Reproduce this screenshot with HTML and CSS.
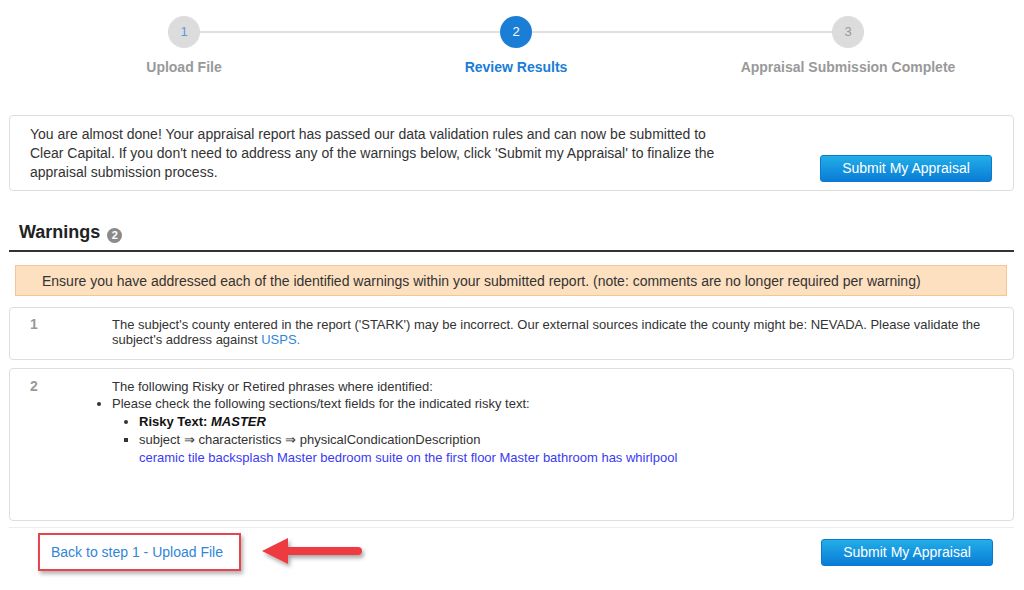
FILE: index.html
```html
<!DOCTYPE html>
<html lang="en">
<head>
  <meta charset="UTF-8">
  <meta name="viewport" content="width=device-width, initial-scale=1.0">
  <title>Review Results</title>
  <link rel="stylesheet" href="styles.css">
</head>
<body>
  <div class="page">
    <ul class="steps">
      <li class="step step_done">
        <span class="step_num">1</span>
        <span class="step_label">Upload File</span>
      </li>
      <li class="step step_active">
        <span class="step_num">2</span>
        <span class="step_label">Review Results</span>
      </li>
      <li class="step">
        <span class="step_num">3</span>
        <span class="step_label">Appraisal Submission Complete</span>
      </li>
    </ul>

    <div class="notice">
      <p class="notice_text">You are almost done! Your appraisal report has passed our data validation rules and can now be submitted to Clear Capital. If you don't need to address any of the warnings below, click 'Submit my Appraisal' to finalize the appraisal submission process.</p>
      <a class="submit_btn" href="javascript:;">Submit My Appraisal</a>
    </div>

    <h2 class="section_title">Warnings <span class="badge">2</span></h2>

    <div class="alert">Ensure you have addressed each of the identified warnings within your submitted report. (note: comments are no longer required per warning)</div>

    <div class="warning">
      <span class="warning_num">1</span>
      <div class="warning_body">
        The subject's county entered in the report ('STARK') may be incorrect. Our external sources indicate the county might be: NEVADA. Please validate the subject's address against <a class="link" href="javascript:;">USPS.</a>
      </div>
    </div>

    <div class="warning warning_tall">
      <span class="warning_num">2</span>
      <div class="warning_body">
        <p class="warning_lead">The following Risky or Retired phrases where identified:</p>
        <ul class="phrase_list">
          <li>Please check the following sections/text fields for the indicated risky text:
            <ul class="phrase_sub">
              <li class="phrase_risky"><b>Risky Text: <i>MASTER</i></b></li>
              <li class="phrase_field">subject &rArr; characteristics &rArr; physicalCondicationDescription
                <div class="phrase_match">ceramic tile backsplash Master bedroom suite on the first floor Master bathroom has whirlpool</div>
              </li>
            </ul>
          </li>
        </ul>
      </div>
    </div>

    <div class="footer">
      <div class="back_box">
        <a class="link back_link" href="javascript:;">Back to step 1 - Upload File</a>
      </div>
      <svg class="pointer" width="106" height="36" viewBox="0 0 106 36">
        <defs>
          <filter id="shade" x="-20%" y="-40%" width="140%" height="180%">
            <feDropShadow dx="2" dy="3" stdDeviation="2" flood-color="#000" flood-opacity="0.35"/>
          </filter>
        </defs>
        <path d="M2 16 L28 3 L28 12 L98 12 Q102 12 102 16 Q102 20 98 20 L28 20 L28 29 Z" fill="#ee3b42" filter="url(#shade)"/>
      </svg>
      <a class="submit_btn" href="javascript:;">Submit My Appraisal</a>
    </div>
  </div>
</body>
</html>
```

FILE: styles.css
```css
body {
  margin: 0;
  background-color: #fff;
  font-family: "Liberation Sans", Arial, sans-serif;
  color: #333;
}
.page {
  width: 1005px;
  padding-left: 9px;
}
.link {
  color: #2f86d8;
  text-decoration: none;
}

/* steps */
.steps {
  display: grid;
  grid-template-columns: repeat(3, 332px);
  margin: 0 0 0 9px;
  padding: 16px 0 0;
  list-style: none;
}
.step {
  position: relative;
  display: flex;
  flex-direction: column;
  align-items: center;
}
.step + .step::before {
  content: "";
  position: absolute;
  top: 15px;
  left: -50%;
  width: 100%;
  height: 2px;
  background-color: #e0e0e0;
}
.step_num {
  position: relative;
  z-index: 1;
  width: 32px;
  height: 32px;
  border-radius: 50%;
  background-color: #dcdcdc;
  color: #999;
  font-size: 13px;
  line-height: 32px;
  text-align: center;
}
.step_done .step_num {
  color: #5a9ad8;
}
.step_active .step_num {
  background-color: #1a7dd6;
  color: #fff;
}
.step_label {
  margin-top: 11px;
  font-size: 14px;
  font-weight: bold;
  line-height: 17px;
  color: #999;
}
.step_active .step_label {
  color: #1a7dd6;
}

/* notice */
.notice {
  display: flex;
  align-items: flex-end;
  justify-content: space-between;
  margin-top: 39px;
  padding: 9px 21px 8px 20px;
  border: 1px solid #dedede;
  border-radius: 4px;
}
.notice_text {
  width: 710px;
  margin: 0;
  font-size: 14px;
  line-height: 19px;
}
.submit_btn {
  display: inline-block;
  width: 172px;
  height: 27px;
  border: 1px solid #0b79cf;
  border-radius: 3px;
  box-sizing: border-box;
  background: linear-gradient(#22aee8, #0a7cd6);
  color: #fff;
  font-size: 14px;
  line-height: 25px;
  text-align: center;
  text-decoration: none;
}

/* warnings */
.section_title {
  margin: 30px 0 0;
  padding: 0 10px 7px;
  border-bottom: 2px solid #333;
  font-size: 18px;
  line-height: 22px;
  color: #222;
}
.badge {
  display: inline-block;
  width: 15px;
  height: 15px;
  margin-left: 2px;
  border-radius: 50%;
  background-color: #8a8a8a;
  color: #fff;
  font-size: 11px;
  line-height: 15px;
  text-align: center;
  vertical-align: -1px;
}
.alert {
  margin: 13px 7px 0 6px;
  padding: 7px 26px 6px;
  border: 1px solid #f6c595;
  background-color: #fde0c0;
  font-size: 14px;
  line-height: 16px;
}
.warning {
  display: flex;
  margin-top: 11px;
  padding: 9px 12px 12px 20px;
  border: 1px solid #dedede;
  border-radius: 4px;
  font-size: 13px;
  line-height: 15px;
}
.warning_tall {
  min-height: 129px;
  margin-top: 8px;
  padding-top: 10px;
}
.warning_num {
  flex: none;
  width: 82px;
  font-size: 14px;
  font-weight: bold;
  color: #999;
}
.warning_body {
  flex: 1;
}
.warning_lead {
  margin: 0;
  line-height: 16px;
}
.phrase_list {
  margin: 0;
  padding: 0;
  line-height: 18px;
}
.phrase_sub {
  margin: 0;
  padding-left: 27px;
  list-style-type: disc;
}
.phrase_risky b {
  color: #111;
}
.phrase_field {
  list-style-type: square;
}
.phrase_match {
  color: #3a3af2;
}

/* footer */
.footer {
  display: flex;
  align-items: center;
  margin-top: 6px;
  padding: 5px 21px 8px 29px;
  border-top: 1px solid #ececec;
}
.back_box {
  width: 203px;
  height: 38px;
  box-sizing: border-box;
  padding-left: 11px;
  border: 2px solid #e8444b;
  box-shadow: 2px 3px 4px rgba(0, 0, 0, 0.3);
  font-size: 14px;
  line-height: 34px;
}
.pointer {
  margin-left: 19px;
  margin-top: 2px;
}
.footer .submit_btn {
  margin-left: auto;
}
```
